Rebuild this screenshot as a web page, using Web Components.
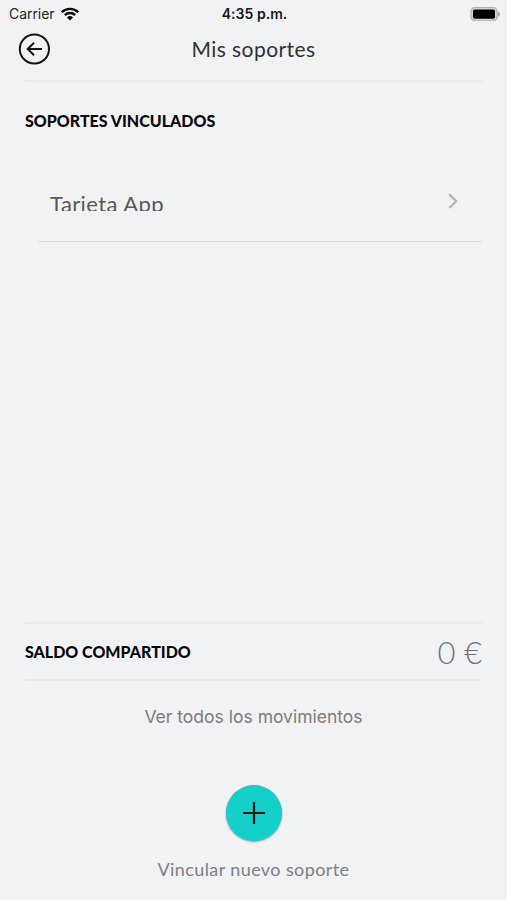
<!DOCTYPE html>
<html lang="es">
<head>
<meta charset="utf-8">
<title>Mis soportes</title>
<style>
html,body{margin:0;height:100%;background:#f1f2f4;overflow:hidden}
body{font-family:Lato,"Open Sans","Liberation Sans",sans-serif}
</style>
</head>
<body>
<supports-screen></supports-screen>
<script>
const define = (name, html) => {
  const t = document.createElement('template');
  t.innerHTML = html;
  customElements.define(name, class extends HTMLElement {
    constructor() {
      super();
      this.attachShadow({mode: 'open'}).append(t.content.cloneNode(true));
    }
  });
};

define('status-bar', `
<style>
:host{display:grid;grid-template-columns:1fr auto 1fr;align-items:center;height:27px;box-sizing:border-box;padding:1px 7px 0 9px;font:14px/26px Inter,"Liberation Sans",sans-serif;color:#222426}
.left{display:flex;align-items:center;gap:6px}
.carrier{letter-spacing:-.05px}
.time{font-weight:600;color:#16181a;letter-spacing:.05px}
.battery{justify-self:end}
svg{display:block}
</style>
<div class="left"><span class="carrier"><slot name="carrier"></slot></span>
<svg width="18" height="14" viewBox="0 0 18 14" fill="none" stroke="#08090a" stroke-width="2.3"><path d="M.8 5.2a11.7 11.7 0 0 1 16.4 0M3.8 8.1a7.5 7.5 0 0 1 10.4 0"/><path d="M9 13.4 6 10.5a4.3 4.3 0 0 1 6 0Z" fill="#08090a" stroke="none"/></svg></div>
<span class="time"><slot name="time"></slot></span>
<svg class="battery" width="30" height="14" viewBox="0 0 30 14"><rect x=".9" y=".4" width="26.2" height="13.4" rx="4" fill="#d3d4d5" stroke="#aeb0b1" stroke-width="1.2"/><rect x="3" y="2.5" width="22" height="9.2" rx="1.8" fill="#000"/><path d="M28 4.8q2.2.5 2.2 2.3T28 9.4Z" fill="#a9abac"/></svg>`);

define('nav-header', `
<style>
:host{display:grid;grid-template-columns:32px 1fr 32px;align-items:center;height:54px;box-sizing:border-box;margin:0 18px;padding-bottom:10px}
button{all:unset;display:block;width:32px;height:32px}
svg{display:block}
h1{margin:0;text-align:center;font-size:21px;line-height:32px;font-weight:400;color:#303234;letter-spacing:.43px}
</style>
<button aria-label="Atrás"><svg width="32" height="32" viewBox="0 0 32 32" fill="none" stroke="#141517" stroke-width="2"><circle cx="16.4" cy="16" r="14.6"/><path d="M24 16H9.8M16 9.8 9.7 16l6.3 6.2"/></svg></button>
<h1><slot></slot></h1>`);

define('rule-line', `
<style>:host{display:block;height:2px;margin:0 25px;background:var(--line,#e8e9eb)}</style>`);

define('section-title', `
<style>:host{display:block;font-size:16px;line-height:24px;font-weight:900;color:#08090b;letter-spacing:var(--track,0px);white-space:nowrap}</style><slot></slot>`);

define('support-row', `
<style>
:host{display:flex;justify-content:space-between;align-items:center;height:81px;box-sizing:border-box;margin:0 25px 0 38px;padding:0 23px 0 12px;border-bottom:1px solid #d9dbdd}
.label{height:19px;line-height:23px;overflow:hidden;font-size:22px;color:#57595e;letter-spacing:.4px;padding-top:0}
svg{display:block}
</style>
<span class="label"><slot></slot></span>
<svg width="12" height="18" viewBox="0 0 12 18" fill="none" stroke="#b4b6b9" stroke-width="2.2"><path d="m2.2 2.4 7 6.8-7 6.8"/></svg>`);

define('balance-row', `
<style>
:host{display:flex;align-items:center;justify-content:space-between;height:55px;padding:0 25px}
.amount{font-size:31px;font-weight:300;line-height:54px;color:#6b7480}
</style>
<slot name="label"></slot><span class="amount"><slot></slot></span>`);

define('movements-link', `
<style>:host{display:block;height:24px;text-align:center;font:17.5px/24px Inter,"Liberation Sans",sans-serif;color:#7b7d80;letter-spacing:0}</style><slot></slot>`);

define('add-action', `
<style>
:host{display:flex;flex-direction:column;align-items:center;gap:16px;font-size:18px;line-height:24px;color:#7e8083;letter-spacing:.4px}
button{all:unset;display:grid;place-items:center;width:56px;height:56px;border-radius:50%;background:#14cfca;box-shadow:0 1px 2px #0006}
svg{display:block}
</style>
<button aria-label="Añadir"><svg width="24" height="24" viewBox="0 0 24 24" stroke="#0b1718" stroke-width="2.2"><path d="M12 1v22M1 12h22"/></svg></button>
<span><slot></slot></span>`);

define('supports-screen', `
<style>
:host{display:flex;flex-direction:column;width:507px;height:900px;background:#f1f2f4}
.head{margin:27px 25px 28px}
.bottom{margin-top:auto}
movements-link{margin:24px 0 56px}
add-action{padding-bottom:19px}
</style>
<status-bar><span slot="carrier">Carrier</span><span slot="time">4:35 p.m.</span></status-bar>
<nav-header>Mis soportes</nav-header>
<rule-line style="margin-top:-1px"></rule-line>
<section-title class="head">SOPORTES VINCULADOS</section-title>
<support-row>Tarjeta App</support-row>
<div class="bottom">
<rule-line></rule-line>
<balance-row><section-title slot="label">SALDO COMPARTIDO</section-title>0 €</balance-row>
<rule-line></rule-line>
<movements-link>Ver todos los movimientos</movements-link>
<add-action>Vincular nuevo soporte</add-action>
</div>`);
</script>
</body>
</html>
